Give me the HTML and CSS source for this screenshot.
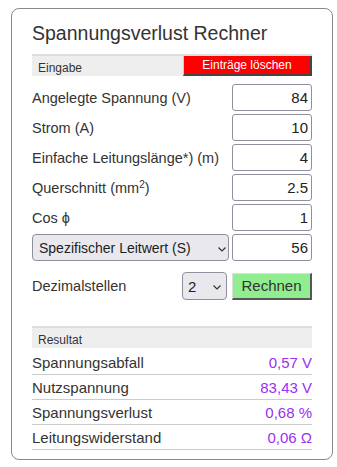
FILE: index.html
```html
<!DOCTYPE html>
<html lang="de">
  <head>
    <meta charset="UTF-8" />
    <meta name="viewport" content="width=device-width, initial-scale=1.0" />
    <title>Spannungsverlust Rechner</title>
    <link rel="stylesheet" href="styles.css">
  </head>
  <body>
    <div class="calc">
      <h1>Spannungsverlust Rechner</h1>

      <div class="section-head">
        <span>Eingabe</span>
        <button class="clear-btn">Einträge löschen</button>
      </div>

      <div class="row">
        <label>Angelegte Spannung (V)</label>
        <input type="text" value="84" />
      </div>
      <div class="row">
        <label>Strom (A)</label>
        <input type="text" value="10" />
      </div>
      <div class="row">
        <label>Einfache Leitungslänge*) (m)</label>
        <input type="text" value="4" />
      </div>
      <div class="row">
        <label>Querschnitt (mm<sup>2</sup>)</label>
        <input type="text" value="2.5" />
      </div>
      <div class="row">
        <label>Cos ϕ</label>
        <input type="text" value="1" />
      </div>
      <div class="row">
        <select class="material">
          <option>Spezifischer Leitwert (S)</option>
        </select>
        <input type="text" value="56" />
      </div>

      <div class="row decimals">
        <label>Dezimalstellen</label>
        <select class="places">
          <option>2</option>
        </select>
        <button class="calc-btn">Rechnen</button>
      </div>

      <div class="section-head result-head">
        <span>Resultat</span>
      </div>
      <div class="result">
        <span>Spannungsabfall</span>
        <span class="value">0,57 V</span>
      </div>
      <div class="result">
        <span>Nutzspannung</span>
        <span class="value">83,43 V</span>
      </div>
      <div class="result">
        <span>Spannungsverlust</span>
        <span class="value">0,68 %</span>
      </div>
      <div class="result">
        <span>Leitungswiderstand</span>
        <span class="value">0,06 Ω</span>
      </div>
    </div>
  </body>
</html>
```

FILE: styles.css
```css
* {
  margin: 0;
  padding: 0;
  box-sizing: border-box;
}

body {
  font-family: "Liberation Sans", Arial, sans-serif;
  color: #333;
  background: #fff;
  padding: 8px 0 0 11px;
}

.calc {
  width: 322px;
  border: 1px solid #888;
  border-radius: 8px;
  padding: 12px 20px 9px 20px;
}

h1 {
  font-size: 19.5px;
  font-weight: normal;
  color: #333;
  line-height: 24px;
  margin-bottom: 9px;
}

.section-head {
  display: flex;
  justify-content: space-between;
  align-items: center;
  background: #eee;
  border-top: 2px solid #ddd;
  height: 22px;
  font-size: 12px;
  padding-left: 6px;
  margin-bottom: 8px;
}

.section-head span {
  padding-top: 3px;
}

.clear-btn {
  width: 129px;
  height: 20px;
  background: #f00;
  color: #fff;
  font-family: inherit;
  font-size: 12px;
  border: 2px outset #999;
  border-top: none;
  border-left: 1px solid #ccc;
}

.row {
  display: flex;
  justify-content: space-between;
  align-items: center;
  margin-bottom: 3px;
  font-size: 14.5px;
}

.row input {
  width: 80px;
  height: 27px;
  border: 1px solid #8f8f9d;
  border-radius: 3px;
  text-align: right;
  padding-right: 3px;
  font-family: inherit;
  font-size: 15px;
  color: #222;
}

sup {
  font-size: 10px;
  vertical-align: 5px;
  line-height: 0;
}

select {
  appearance: none;
  height: 27px;
  border: 1px solid #8f8f9d;
  border-radius: 4px;
  background: #e9e9ed url("data:image/svg+xml,%3Csvg xmlns='http://www.w3.org/2000/svg' width='8' height='5'%3E%3Cpath d='M0.5 0.5 L4 4 L7.5 0.5' fill='none' stroke='%23333' stroke-width='1.2'/%3E%3C/svg%3E") no-repeat;
  font-family: inherit;
  color: #222;
}

.material {
  width: 197px;
  font-size: 14px;
  padding-left: 6px;
  background-position: 185px 12px;
}

.decimals {
  margin-top: 11px;
  height: 28px;
}

.decimals label {
  flex: 1;
}

.places {
  width: 45px;
  height: 28px;
  font-size: 15px;
  padding-left: 5px;
  margin-right: 5px;
  background-position: 30px 12px;
}

.calc-btn {
  width: 80px;
  height: 27px;
  background: #90ee90;
  color: #333;
  font-family: inherit;
  font-size: 15px;
  border: 2px outset #aaa;
  border-top: 1px solid #ddd;
  border-left: 1px solid #ddd;
}

.result-head {
  margin-top: 26px;
  margin-bottom: 2px;
}

.result {
  display: flex;
  justify-content: space-between;
  align-items: center;
  height: 25px;
  border-bottom: 1px solid #ccc;
  font-size: 15px;
  padding-top: 1px;
}

.value {
  color: #9a30f0;
}
```
